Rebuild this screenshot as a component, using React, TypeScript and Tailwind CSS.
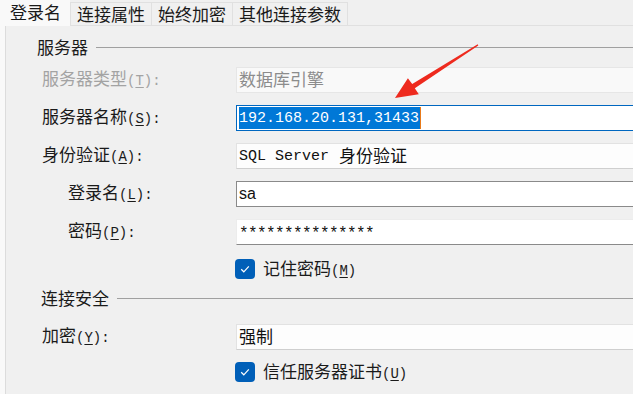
import React from "react";

const cjk = { fontFamily: '"Noto Sans CJK SC", "Liberation Sans", sans-serif' };
const mono = { fontFamily: '"Liberation Mono", "Noto Sans CJK SC", monospace' };

function Lbl({ text, k, colon = true }: { text: string; k: string; colon?: boolean }) {
  return (
    <span className="whitespace-nowrap">
      {text}
      <span className="text-[14px]" style={mono}>
        (<span className="underline underline-offset-2">{k}</span>){colon ? ":" : ""}
      </span>
    </span>
  );
}

function Section({ title, className }: { title: string; className: string }) {
  return (
    <div className={"flex items-center h-[22px] pl-[31px] " + className}>
      <span className="text-[#1a1a1a] pb-[2px]">{title}</span>
      <div className="flex-1 h-px bg-[#a0a0a0] ml-[8px]" />
    </div>
  );
}

function Check({ children, className }: { children: React.ReactNode; className: string }) {
  return (
    <div className={"flex items-center h-[20px] pl-[229px] " + className}>
      <span className="w-[20px] h-[20px] rounded-[4px] bg-[#005fb8] flex items-center justify-center">
        <svg width="12" height="12" viewBox="0 0 12 12">
          <path d="M2.2 6.3 L4.8 8.8 L9.8 3.4" fill="none" stroke="white" strokeWidth="1.2" />
        </svg>
      </span>
      <span className="ml-[8px] text-[#1a1a1a] pb-[2px]">{children}</span>
    </div>
  );
}

function Row({
  label,
  indent,
  box,
  className,
  children,
  muted,
}: {
  label: React.ReactNode;
  indent?: boolean;
  box: string;
  className: string;
  children: React.ReactNode;
  muted?: boolean;
}) {
  return (
    <div className={"flex h-[26px] pl-[36px] " + className}>
      <div
        className={
          "w-[194px] flex items-center pb-[3px] " +
          (indent ? "pl-[26px] " : "") +
          (muted ? "text-[#a3a3a3]" : "text-[#1a1a1a]")
        }
      >
        {label}
      </div>
      <div className={"flex-1 flex items-center pl-[2px] border-l " + box}>{children}</div>
    </div>
  );
}

export default function App() {
  return (
    <div className="relative w-[633px] h-[394px] overflow-hidden bg-[#f0f0f0] text-[17px] leading-none" style={cjk}>
      <div className="flex h-[26px]">
        <div className="w-[70px] bg-[#f9f9f9] pl-[10px] pb-[3px] flex items-center text-[#1a1a1a]">登录名</div>
        <div className="mt-[2px] px-[6px] pb-[2px] flex items-center bg-[#f0f0f0] border border-[#e0e0e0] text-[#1a1a1a]">
          连接属性
        </div>
        <div className="mt-[2px] px-[6px] pb-[2px] flex items-center bg-[#f0f0f0] border border-l-0 border-[#e0e0e0] text-[#1a1a1a]">
          始终加密
        </div>
        <div className="mt-[2px] px-[6px] pb-[2px] flex items-center bg-[#f0f0f0] border border-l-0 border-[#e0e0e0] text-[#1a1a1a]">
          其他连接参数
        </div>
        <div className="flex-1 border-b border-[#e0e0e0]" />
      </div>
      <div className="flex h-[368px]">
        <div className="w-[6px] bg-[#f9f9f9] border-r border-[#dcdcdc]" />
        <div className="flex-1 flex flex-col">
          <Section title="服务器" className="mt-[10px]" />
          <Row
            className="mt-[9px]"
            muted
            label={<Lbl text="服务器类型" k="T" />}
            box="bg-[#f9f9f9] border-[#e6e6e6] border-y"
          >
            <span className="text-[#8c8c8c] pb-[3px]">数据库引擎</span>
          </Row>
          <Row
            className="mt-[12px]"
            label={<Lbl text="服务器名称" k="S" />}
            box="bg-white border-[#0067c0] border-y"
          >
            <span className="h-[22px] flex items-center bg-[#0078d7] text-white text-[15px] pr-px" style={mono}>
              192.168.20.131,31433
            </span>
            <span className="w-px h-[22px] bg-[#e87a1a]" />
          </Row>
          <Row
            className="mt-[12px]"
            label={<Lbl text="身份验证" k="A" />}
            box="bg-[#fdfdfd] border-[#e2e2e2] border-y border-b-[#cfcfcf]"
          >
            <span className="text-[15px] text-[#111]" style={mono}>
              SQL Server
            </span>
            <span className="ml-[10px] text-[#111] pb-[3px]">身份验证</span>
          </Row>
          <Row
            className="mt-[12px]"
            indent
            label={<Lbl text="登录名" k="L" />}
            box="bg-white border-[#8a8a8a] border-y"
          >
            <span className="text-[16px] text-[#111] pb-[1px]" style={{ fontFamily: '"Liberation Sans", sans-serif' }}>
              sa
            </span>
          </Row>
          <Row
            className="mt-[12px]"
            indent
            label={<Lbl text="密码" k="P" />}
            box="bg-white border-[#ececec] border-y border-b-[#8a8a8a]"
          >
            <span className="text-[16px] tracking-[-0.6px] text-[#111] pt-[4px]" style={mono}>
              ***************
            </span>
          </Row>
          <Check className="mt-[14px]">
            <Lbl text="记住密码" k="M" colon={false} />
          </Check>
          <Section title="连接安全" className="mt-[8px] pl-[35px]" />
          <Row
            className="mt-[15px]"
            label={<Lbl text="加密" k="Y" />}
            box="bg-[#fdfdfd] border-[#e2e2e2] border-y border-b-[#cfcfcf]"
          >
            <span className="text-[#111] pb-[3px]">强制</span>
          </Row>
          <Check className="mt-[12px]">
            <Lbl text="信任服务器证书" k="U" colon={false} />
          </Check>
        </div>
      </div>
      <svg className="absolute left-0 top-0 pointer-events-none" width="633" height="394">
        <polygon
          points="477.7,44.2 412.2,84.1 407.9,78.2 395,98 418.8,94.2 414.8,88.3 478.3,45.6"
          fill="#ee2a1e"
        />
      </svg>
    </div>
  );
}
